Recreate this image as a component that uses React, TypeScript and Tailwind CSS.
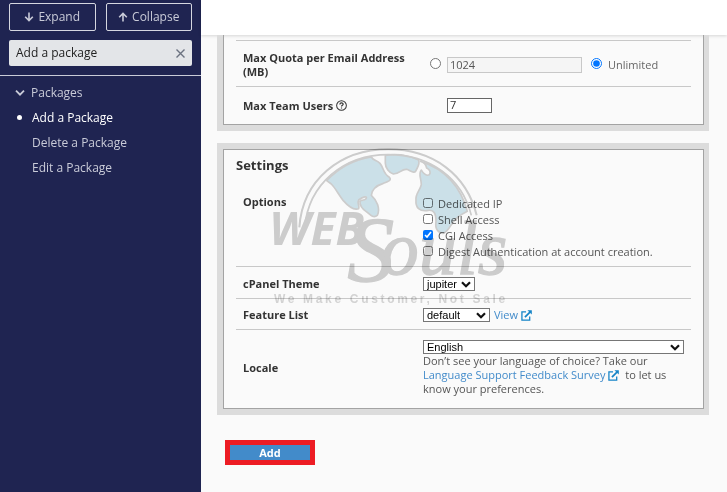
import React from 'react';
import { clsx } from 'clsx';

const menuItems = [
  { label: 'Add a Package', active: true },
  { label: 'Delete a Package', active: false },
  { label: 'Edit a Package', active: false },
];

const options = [
  { id: 'dedicated-ip', label: 'Dedicated IP', checked: false },
  { id: 'shell', label: 'Shell Access', checked: false },
  { id: 'cgi', label: 'CGI Access', checked: true },
  { id: 'digest', label: 'Digest Authentication at account creation.', checked: false },
];

function ArrowIcon({ up = false }: { up?: boolean }) {
  return (
    <svg viewBox="0 0 10 10" className={clsx('size-[10px]', up && 'rotate-180')} fill="none" stroke="currentColor" strokeWidth="1.6" aria-hidden="true">
      <path d="M5 0.5V8.5M1.2 4.7L5 8.5L8.8 4.7" />
    </svg>
  );
}

function ExternalIcon() {
  return (
    <svg viewBox="0 0 12 12" className="inline-block size-[11px] align-[-2px]" fill="none" stroke="#1584c7" aria-hidden="true">
      <path d="M5.5 2H1V11H9.5V7" strokeWidth="1.4" />
      <path d="M4.3 7.7L9.8 2.2" strokeWidth="1.9" />
      <path d="M7 0.2H11.8V5Z" fill="#1584c7" stroke="none" />
    </svg>
  );
}

function Watermark() {
  return (
    <svg viewBox="0 0 780 525" className="pointer-events-none absolute -top-[9px] left-[37px] h-[175px] w-[260px] mix-blend-multiply" aria-hidden="true">
      <g fill="#cfe5ed" stroke="#d0d0d0" strokeWidth="5" strokeLinejoin="round">
        <path d="M200 122C240 80 290 58 334 51C340 62 350 60 360 70C372 84 368 100 388 112C396 120 386 124 370 130C350 136 336 146 334 166C350 180 362 206 352 226C340 236 330 224 318 214C306 206 300 200 300 186C298 180 314 182 318 176C324 168 310 168 296 180C290 190 300 198 296 206C280 212 264 198 250 182C236 164 226 144 214 132Z" />
        <path d="M376 46C410 40 446 46 476 60C480 74 472 82 468 92C464 102 452 92 440 88C424 86 420 102 400 102C388 98 376 84 376 70Z" />
        <path d="M482 64C490 66 498 74 500 84C508 88 514 96 508 104C500 110 488 98 484 90C474 100 484 116 484 134C480 152 466 160 468 180C466 204 480 214 500 212C524 206 528 224 528 244C524 268 536 280 550 280C562 276 570 260 578 248C590 232 606 222 622 214C604 144 556 86 482 64Z" />
      </g>
      <g fill="none" stroke="#d0d0d0">
        <path d="M118 262C128 120 240 28 385 28C520 28 620 104 650 226" strokeWidth="6" />
        <path d="M134 262C146 132 250 44 385 44C510 44 606 114 634 226" strokeWidth="5" />
      </g>
      <g fill="#d0d0d0">
        <text x="28" y="314" className="font-['Open_Sans'] text-[138px] font-bold italic">WEB</text>
        <text x="262" y="422" className="font-['Liberation_Serif'] text-[282px] italic" stroke="#d0d0d0" strokeWidth="4">S</text>
        <text x="362" y="403" className="font-['Liberation_Serif'] text-[228px] italic" stroke="#d0d0d0" strokeWidth="4">ouls</text>
      </g>
      <text x="42" y="488" fill="#d8d8d8" className="font-['Liberation_Sans'] text-[36px] font-bold tracking-[8px]">We Make Customer, Not Sale</text>
    </svg>
  );
}

interface SelectProps {
  id: string;
  value: string;
  className: string;
}

function Select({ id, value, className }: SelectProps) {
  return (
    <div className={clsx('relative', className)}>
      <select id={id} className="block h-[14px] w-full appearance-none border border-[#767676] bg-white pl-[3px] font-['Liberation_Sans',sans-serif] text-[11px] leading-3 text-black">
        <option>{value}</option>
      </select>
      <svg viewBox="0 0 10 7" className="pointer-events-none absolute top-1 right-1 h-[7px] w-[10px]" fill="none" stroke="#111" strokeWidth="2.2" aria-hidden="true">
        <path d="M1 1.2L5 5.2L9 1.2" />
      </svg>
    </div>
  );
}

interface RowProps {
  label: React.ReactNode;
  className?: string;
  children: React.ReactNode;
}

function Row({ label, className, children }: RowProps) {
  return (
    <div className={clsx('grid grid-cols-[180px_1fr] pl-[7px]', className)}>
      <div className="text-[11px] leading-[14px] font-bold text-[#333]">{label}</div>
      <div>{children}</div>
    </div>
  );
}

export default function App() {
  return (
    <div className="flex min-h-screen bg-[#fafafa] font-['Open_Sans',sans-serif] text-[11px] text-[#555]">
      {/* Sidebar */}
      <aside className="w-[201px] shrink-0 bg-[#1f2451] text-[12px] text-[#c9cbd8]">
        <div className="border-b border-[#c9cbd8] px-[9px] pt-[3px] pb-[9px]">
          <div className="grid grid-cols-2 gap-[10px]">
            <button className="flex h-7 items-center justify-center gap-1 rounded-[2px] border border-[#d5d7e0]">
              <ArrowIcon />
              Expand
            </button>
            <button className="flex h-7 items-center justify-center gap-1 rounded-[2px] border border-[#d5d7e0]">
              <ArrowIcon up />
              Collapse
            </button>
          </div>
          <div className="mt-[9px] flex h-[26px] items-center rounded-[2px] bg-[#e3e5e8] px-[7px]">
            <input aria-label="Search" defaultValue="Add a package" className="min-w-0 flex-1 text-[#222] outline-none" />
            <button aria-label="Clear search" className="text-[#6b7280]">
              <svg viewBox="0 0 9 9" className="size-[9px]" stroke="currentColor" strokeWidth="1.4">
                <path d="M0.5 0.5L8.5 8.5M8.5 0.5L0.5 8.5" />
              </svg>
            </button>
          </div>
        </div>
        <nav className="pt-1">
          <button className="flex h-[25px] items-center gap-[6px] pl-[15px]">
            <svg viewBox="0 0 10 6" className="h-[6px] w-[10px]" fill="none" stroke="currentColor" strokeWidth="1.8">
              <path d="M1 0.7L5 4.7L9 0.7" />
            </svg>
            Packages
          </button>
          <ul>
            {menuItems.map((item) => (
              <li key={item.label} className="flex h-[25px] items-center pl-[17px]">
                <span className={clsx('mr-[10px] size-[5px] rounded-full', item.active && 'bg-white')} />
                <a href="#" className={clsx(item.active && 'text-white')}>{item.label}</a>
              </li>
            ))}
          </ul>
        </nav>
      </aside>

      {/* Content */}
      <div className="min-w-0 flex-1">
        <header className="h-[35px] bg-white shadow-[0_1px_3px_rgba(0,0,0,0.15)]" />
        <main className="pr-[18px] pl-4">
          <section className="border-x-[6px] border-r-[5px] border-b-[6px] border-[#dcdcdc]">
            <div className="border-x border-b border-[#a3a3a3] px-3 pt-[5px]">
              <Row label="Max Quota per Email Address (MB)" className="h-[46px] items-center border-t border-[#c8c8c8] pt-[3px]">
                <div className="flex items-center">
                  <input type="radio" name="quota" aria-label="Custom quota" className="mb-[3px] ml-[7px] size-[11px]" />
                  <input aria-label="Quota in MB" defaultValue="1024" disabled className="ml-[6px] h-4 w-[135px] border border-[#c8c8c8] bg-[#f5f5f5] px-[2px]" />
                  <input type="radio" name="quota" id="unlimited" defaultChecked className="mb-[3px] ml-[9px] size-[11px]" />
                  <label htmlFor="unlimited" className="ml-[6px] text-[#666]">Unlimited</label>
                </div>
              </Row>
              <Row
                className="h-[38px] items-center border-t border-[#c8c8c8]"
                label={
                  <span className="flex items-center gap-[3px]">
                    <label htmlFor="team-users">Max Team Users</label>
                    <svg viewBox="0 0 12 12" className="size-[11px]" fill="none" stroke="#333" strokeWidth="1.1" aria-hidden="true">
                      <circle cx="6" cy="6" r="5.3" />
                      <path d="M4.2 4.8C4.2 2.5 7.8 2.5 7.8 4.7C7.8 5.8 6 5.9 6 7.2M6 8.2V9.4" strokeWidth="1.3" />
                    </svg>
                  </span>
                }
              >
                <input id="team-users" defaultValue="7" className="ml-6 block h-[15px] w-[45px] border border-[#666] bg-white px-[2px] text-[#333]" />
              </Row>
            </div>
          </section>

          <section className="relative mt-3 border-[6px] border-r-[5px] border-[#dcdcdc]">
            <div className="border border-[#a3a3a3] px-3">
              <h2 className="pt-[5px] text-[13px] leading-5 font-bold text-[#333]">Settings</h2>
              <Row label="Options" className="items-start pt-5 pb-[7px]">
                <ul>
                  {options.map((option) => (
                    <li key={option.id} className="flex h-4 items-center gap-[5px]">
                      <input type="checkbox" id={option.id} defaultChecked={option.checked} className="size-[10px]" />
                      <label htmlFor={option.id} className="pt-[2px]">{option.label}</label>
                    </li>
                  ))}
                </ul>
              </Row>
              <Row label={<label htmlFor="theme">cPanel Theme</label>} className="h-8 items-center border-t border-[#c8c8c8] pt-[2px]">
                <Select id="theme" value="jupiter" className="w-[52px]" />
              </Row>
              <Row label={<label htmlFor="features">Feature List</label>} className="h-[31px] items-center border-t border-[#c8c8c8] pt-[2px]">
                <div className="flex items-center gap-1">
                  <Select id="features" value="default" className="w-[67px]" />
                  <a href="#" className="text-[#428bca]">View <ExternalIcon /></a>
                </div>
              </Row>
              <Row label={<label htmlFor="locale">Locale</label>} className="h-[79px] items-center border-t border-[#c8c8c8] pb-[3px]">
                <div className="pr-[7px]">
                  <Select id="locale" value="English" className="w-full" />
                  <p className="leading-[14px]">
                    Don’t see your language of choice? Take our{' '}
                    <a href="#" className="mr-[3px] text-[#428bca]">Language Support Feedback Survey <ExternalIcon /></a> to let us know your preferences.
                  </p>
                </div>
              </Row>
            </div>
            <Watermark />
          </section>

          <button className="mt-[25px] ml-2 block h-[25px] w-[90px] border-[5px] border-[#ed1c24] bg-[#428bca] text-[11px] leading-[15px] font-bold text-white">
            Add
          </button>
        </main>
      </div>
    </div>
  );
}
